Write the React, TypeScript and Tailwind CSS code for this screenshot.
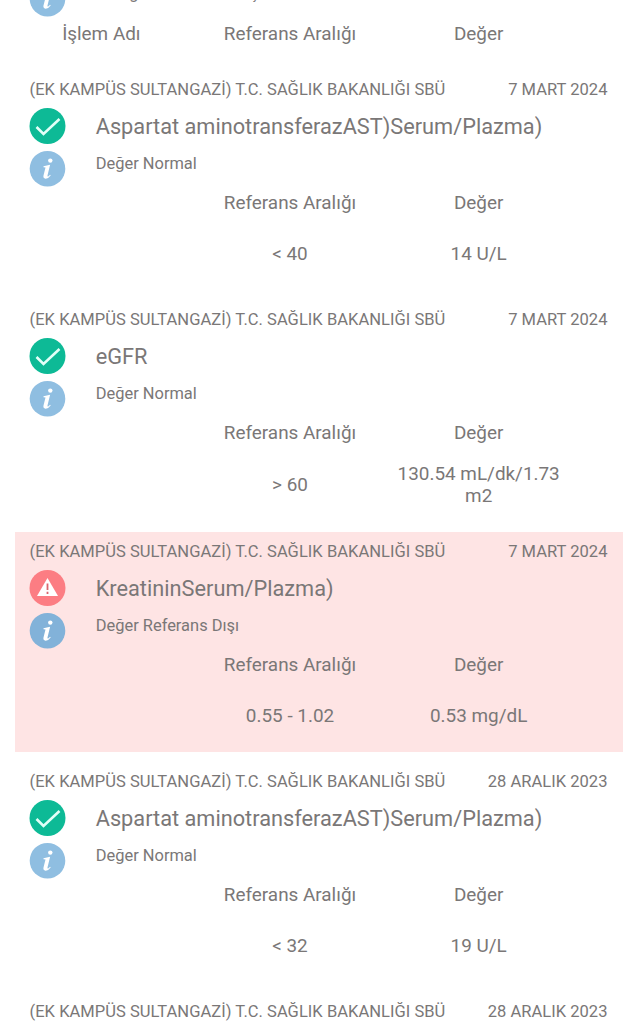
import clsx from 'clsx';

interface Result {
  date: string;
  name?: string;
  status?: string;
  range?: string;
  value?: string;
  alert?: boolean;
}

const INSTITUTION = '(EK KAMPÜS SULTANGAZİ) T.C. SAĞLIK BAKANLIĞI SBÜ';

const results: Result[] = [
  { date: '7 MART 2024', name: 'Aspartat aminotransferazAST)Serum/Plazma)', status: 'Değer Normal', range: '< 40', value: '14 U/L' },
  { date: '7 MART 2024', name: 'eGFR', status: 'Değer Normal', range: '> 60', value: '130.54 mL/dk/1.73 m2' },
  { date: '7 MART 2024', name: 'KreatininSerum/Plazma)', status: 'Değer Referans Dışı', range: '0.55 - 1.02', value: '0.53 mg/dL', alert: true },
  { date: '28 ARALIK 2023', name: 'Aspartat aminotransferazAST)Serum/Plazma)', status: 'Değer Normal', range: '< 32', value: '19 U/L' },
  { date: '28 ARALIK 2023' },
];

function CheckIcon() {
  return (
    <svg viewBox="-0.5 0 36 36" className="block size-9 overflow-visible">
      <circle cx="18" cy="18" r="18" fill="#0dba96" />
      <path d="M7 19 L14 26 L30 11" fill="none" stroke="#e2fff8" strokeWidth="2.6" />
    </svg>
  );
}

function WarningIcon() {
  return (
    <svg viewBox="-0.5 0 36 36" className="block size-9 overflow-visible">
      <circle cx="18" cy="18" r="18" fill="#fc7d83" />
      <path d="M18 8 L28.5 26 H7.5 Z" fill="#fff" />
      <path d="M18 13.5 V20 M18 21.8 V24" stroke="#d9656e" strokeWidth="1.8" />
    </svg>
  );
}

function InfoIcon({ alert }: { alert?: boolean }) {
  return (
    <svg viewBox="-0.5 0 36 36" className="block size-9 overflow-visible">
      <circle cx="18" cy="17.7" r="17.8" fill={alert ? '#82b2d9' : '#8fbee1'} />
      <circle cx="20.8" cy="9.6" r="2.2" fill="#fff" />
      <path
        d="M14 15.2 L20.6 13.8 L18 24.6 Q17.8 26 19 25.2 L20.6 23.8 L21.2 24.6 Q18.6 28 16 27.8 Q13.4 27.4 14 24.6 L16 16.6 L14 16.2 Z"
        fill="#fff"
      />
    </svg>
  );
}

function ResultCard({ result }: { result: Result }) {
  return (
    <article className={clsx('mr-[14px] mb-[10px] ml-[15px] shrink-0', result.alert && 'bg-[#fee4e4]')}>
      <div className="flex h-[38px] items-center justify-between pt-[2px] pr-[15.5px] pl-[14.5px] text-[16.55px] leading-5 tracking-[0.025px]">
        <span>{INSTITUTION}</span>
        <span>{result.date}</span>
      </div>
      {result.name && (
        <>
          <div className="flex pl-[14px]">
            <div className="flex w-[66.7px] flex-col gap-[7px]">
              {result.alert ? <WarningIcon /> : <CheckIcon />}
              <InfoIcon alert={result.alert} />
            </div>
            <div>
              <h2 className="h-[38px] text-[21.75px] leading-[38px]">{result.name}</h2>
              <p className="h-[35px] text-[16.45px] leading-[35px]">{result.status}</p>
            </div>
          </div>
          <div className="-ml-2 grid w-[566px] grid-cols-3 text-center text-[18.9px] leading-[22px]">
            <span className="col-start-2 h-[33px] pt-[5px]">Referans Aralığı</span>
            <span className="h-[33px] pt-[5px]">Değer</span>
            <div className="col-start-2 flex min-h-[70px] items-center justify-center pb-[2px]">{result.range}</div>
            {/* Long values wrap to two lines and stretch the row */}
            <div className="flex min-h-[70px] items-center justify-center px-3 pt-[13px] pb-[15px]">{result.value}</div>
          </div>
        </>
      )}
    </article>
  );
}

export default function App() {
  return (
    <main className="flex h-[1024px] w-full flex-col overflow-hidden bg-white font-['Roboto',sans-serif] text-[#7a7777]">
      {/* Tail of the group scrolled past the top edge */}
      <div className="flex h-[70px] shrink-0 flex-col">
        <div className="-mt-[19px] flex pl-[29px]">
          <div className="w-[67px]"><InfoIcon /></div>
          <p className="h-9 text-[16.45px] leading-[26px]">Kategori Belirtilmemiş</p>
        </div>
        <div className="ml-[7px] grid w-[566px] grid-cols-3 pt-[6px] text-center text-[18.9px] leading-[22px]">
          <span>İşlem Adı</span>
          <span>Referans Aralığı</span>
          <span>Değer</span>
        </div>
      </div>
      {results.map((result, i) => (
        <ResultCard key={i} result={result} />
      ))}
    </main>
  );
}
